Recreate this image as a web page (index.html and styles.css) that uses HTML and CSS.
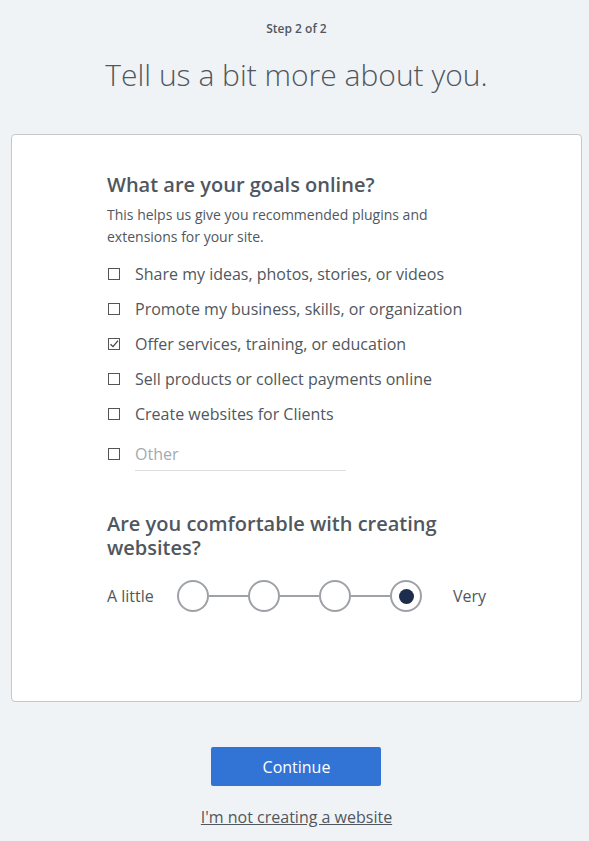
FILE: index.html
```html
<!DOCTYPE html>
<html>
<head>
<meta charset="utf-8">
<link rel="stylesheet" href="styles.css">
</head>
<body>
<div class="page">
  <div class="step">Step 2 of 2</div>
  <h1 class="title">Tell us a bit more about you.</h1>
  <div class="card">
    <div class="inner">
      <h2 class="q">What are your goals online?</h2>
      <p class="desc">This helps us give you recommended plugins and extensions for your site.</p>
      <ul class="opts">
        <li><span class="box"></span><span>Share my ideas, photos, stories, or videos</span></li>
        <li><span class="box"></span><span>Promote my business, skills, or organization</span></li>
        <li><span class="box checked"><svg viewBox="0 0 12 12" width="12" height="12"><path d="M2.5 6.2 L5 8.6 L10 2.6" fill="none" stroke="#444" stroke-width="1.3"/></svg></span><span>Offer services, training, or education</span></li>
        <li><span class="box"></span><span>Sell products or collect payments online</span></li>
        <li><span class="box"></span><span>Create websites for Clients</span></li>
        <li class="other"><span class="box"></span><span class="otherfield">Other</span></li>
      </ul>
      <h2 class="q q2">Are you comfortable with creating websites?</h2>
      <div class="scale">
        <span class="lbl">A little</span>
        <div class="track">
          <span class="dot"></span><span class="bar"></span>
          <span class="dot"></span><span class="bar"></span>
          <span class="dot"></span><span class="bar"></span>
          <span class="dot sel"></span>
        </div>
        <span class="very">Very</span>
      </div>
    </div>
  </div>
  <div class="actions">
    <button class="btn">Continue</button>
    <a class="link" href="#">I'm not creating a website</a>
  </div>
</div>
</body>
</html>
```
FILE: styles.css
```css
* { box-sizing: border-box; }
html, body { margin: 0; padding: 0; }
body {
  background: #f0f3f6;
  font-family: "Open Sans", "Noto Sans", sans-serif;
  color: #50575e;
}
.page {
  display: flex;
  flex-direction: column;
  align-items: center;
  padding-top: 21px;
  padding-left: 4px;
}
.step {
  font-size: 12px;
  font-weight: 600;
  color: #50575e;
  line-height: 16px;
}
.title {
  margin: 18px 0 0;
  font-size: 30px;
  font-weight: 300;
  line-height: 40px;
  color: #50575e;
}
.card {
  margin-top: 39px;
  width: 571px;
  height: 568px;
  background: #fff;
  border: 1px solid #c3c8cd;
  border-radius: 4px;
  align-self: flex-start;
  margin-left: 7px;
}
.inner {
  padding: 38px 0 0 95px;
  width: 500px;
}
.q {
  margin: 0;
  font-size: 20px;
  font-weight: 600;
  line-height: 24px;
  color: #50575e;
}
.desc {
  margin: 7px 0 0;
  font-size: 14px;
  line-height: 22px;
  color: #50575e;
  width: 360px;
}
.opts {
  list-style: none;
  margin: 8px 0 0;
  padding: 0;
}
.opts li {
  display: flex;
  align-items: center;
  height: 35px;
  font-size: 16px;
  color: #50575e;
}
.box {
  width: 12px;
  height: 12px;
  border: 1px solid #555;
  margin: 0 15px 0 1px;
  flex: none;
  position: relative;
}
.box svg { position: absolute; left: -1px; top: -1px; }
.opts li.other {
  height: auto;
  align-items: flex-start;
  padding-top: 12px;
}
.opts li.other .box { margin-top: 5px; }
.otherfield {
  color: #a2aab2;
  width: 211px;
  border-bottom: 1px solid #dcdfe2;
  line-height: 22px;
  padding-bottom: 5px;
}
.q2 { margin-top: 41px; width: 370px; }
.scale {
  display: flex;
  align-items: center;
  margin-top: 20px;
  font-size: 16px;
}
.lbl { width: 70px; flex: none; }
.very { margin-left: 31px; flex: none; }
.track {
  display: flex;
  align-items: center;
  flex: none;
}
.dot {
  width: 32px;
  height: 32px;
  border: 2px solid #9ea2a6;
  border-radius: 50%;
  flex: none;
  display: flex;
  align-items: center;
  justify-content: center;
}
.dot.sel::after {
  content: "";
  width: 15px;
  height: 15px;
  border-radius: 50%;
  background: #1d2d4d;
}
.bar {
  width: 39px;
  height: 2px;
  background: #9ea2a6;
  flex: none;
}
.actions {
  display: flex;
  flex-direction: column;
  align-items: center;
  margin-top: 45px;
}
.btn {
  width: 170px;
  height: 39px;
  background: #3274d6;
  border: none;
  border-radius: 2px;
  color: #fff;
  font-family: "Open Sans", "Noto Sans", sans-serif;
  font-size: 16px;
}
.link {
  margin-top: 20px;
  font-size: 16px;
  color: #50575e;
  text-decoration: underline;
  line-height: 22px;
}
```
